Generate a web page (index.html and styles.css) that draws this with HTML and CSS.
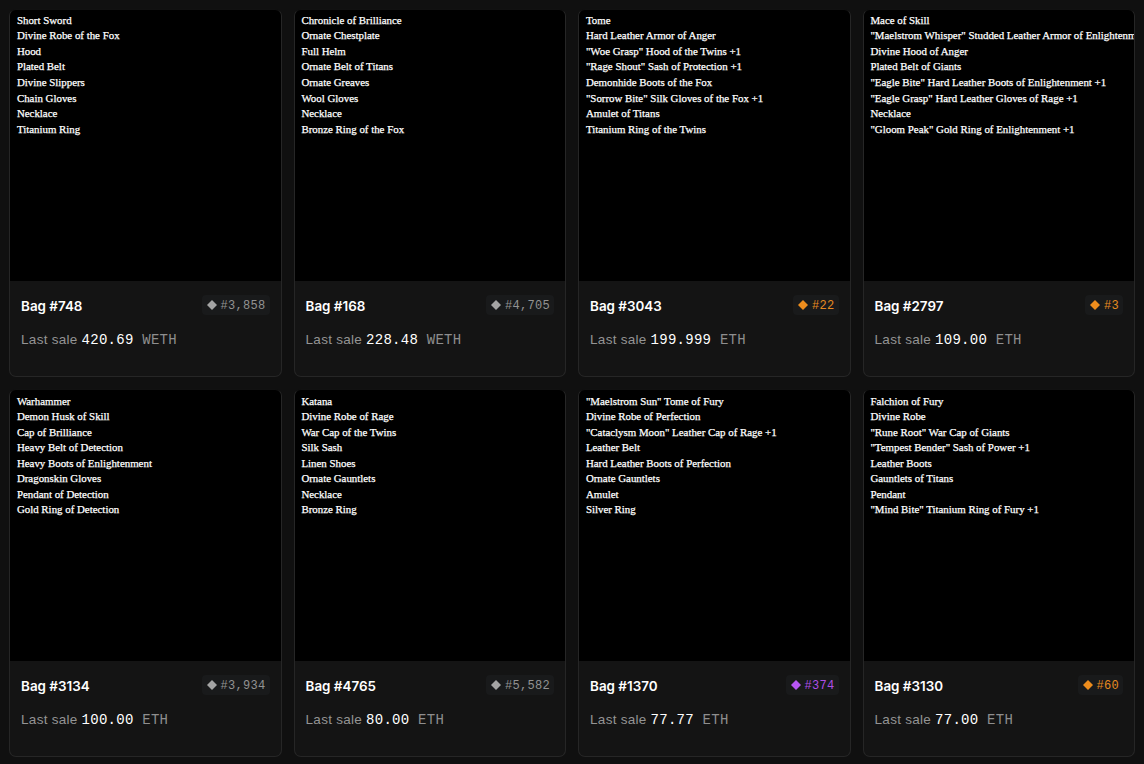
FILE: index.html
```html
<!DOCTYPE html>
<html lang="en">
<head>
<meta charset="utf-8">
<title>Bags</title>
<link rel="stylesheet" href="styles.css">
</head>
<body>
<main class="grid">
  <article class="card">
    <ul class="loot"><li>Short Sword</li><li>Divine Robe of the Fox</li><li>Hood</li><li>Plated Belt</li><li>Divine Slippers</li><li>Chain Gloves</li><li>Necklace</li><li>Titanium Ring</li></ul>
    <div class="info">
      <div class="head"><h2 class="name">Bag #748</h2><span class="rank"><svg class="gem" viewBox="0 0 10 10"><path d="M5 0 10 5 5 10 0 5Z"/></svg>#3,858</span></div>
      <p class="sale"><span class="label">Last sale</span><span class="price">420.69</span><span class="unit">WETH</span></p>
    </div>
  </article>
  <article class="card">
    <ul class="loot"><li>Chronicle of Brilliance</li><li>Ornate Chestplate</li><li>Full Helm</li><li>Ornate Belt of Titans</li><li>Ornate Greaves</li><li>Wool Gloves</li><li>Necklace</li><li>Bronze Ring of the Fox</li></ul>
    <div class="info">
      <div class="head"><h2 class="name">Bag #168</h2><span class="rank"><svg class="gem" viewBox="0 0 10 10"><path d="M5 0 10 5 5 10 0 5Z"/></svg>#4,705</span></div>
      <p class="sale"><span class="label">Last sale</span><span class="price">228.48</span><span class="unit">WETH</span></p>
    </div>
  </article>
  <article class="card">
    <ul class="loot"><li>Tome</li><li>Hard Leather Armor of Anger</li><li>"Woe Grasp" Hood of the Twins +1</li><li>"Rage Shout" Sash of Protection +1</li><li>Demonhide Boots of the Fox</li><li>"Sorrow Bite" Silk Gloves of the Fox +1</li><li>Amulet of Titans</li><li>Titanium Ring of the Twins</li></ul>
    <div class="info">
      <div class="head"><h2 class="name">Bag #3043</h2><span class="rank orange"><svg class="gem" viewBox="0 0 10 10"><path d="M5 0 10 5 5 10 0 5Z"/></svg>#22</span></div>
      <p class="sale"><span class="label">Last sale</span><span class="price">199.999</span><span class="unit">ETH</span></p>
    </div>
  </article>
  <article class="card">
    <ul class="loot"><li>Mace of Skill</li><li>"Maelstrom Whisper" Studded Leather Armor of Enlightenm</li><li>Divine Hood of Anger</li><li>Plated Belt of Giants</li><li>"Eagle Bite" Hard Leather Boots of Enlightenment +1</li><li>"Eagle Grasp" Hard Leather Gloves of Rage +1</li><li>Necklace</li><li>"Gloom Peak" Gold Ring of Enlightenment +1</li></ul>
    <div class="info">
      <div class="head"><h2 class="name">Bag #2797</h2><span class="rank orange"><svg class="gem" viewBox="0 0 10 10"><path d="M5 0 10 5 5 10 0 5Z"/></svg>#3</span></div>
      <p class="sale"><span class="label">Last sale</span><span class="price">109.00</span><span class="unit">ETH</span></p>
    </div>
  </article>
  <article class="card">
    <ul class="loot"><li>Warhammer</li><li>Demon Husk of Skill</li><li>Cap of Brilliance</li><li>Heavy Belt of Detection</li><li>Heavy Boots of Enlightenment</li><li>Dragonskin Gloves</li><li>Pendant of Detection</li><li>Gold Ring of Detection</li></ul>
    <div class="info">
      <div class="head"><h2 class="name">Bag #3134</h2><span class="rank"><svg class="gem" viewBox="0 0 10 10"><path d="M5 0 10 5 5 10 0 5Z"/></svg>#3,934</span></div>
      <p class="sale"><span class="label">Last sale</span><span class="price">100.00</span><span class="unit">ETH</span></p>
    </div>
  </article>
  <article class="card">
    <ul class="loot"><li>Katana</li><li>Divine Robe of Rage</li><li>War Cap of the Twins</li><li>Silk Sash</li><li>Linen Shoes</li><li>Ornate Gauntlets</li><li>Necklace</li><li>Bronze Ring</li></ul>
    <div class="info">
      <div class="head"><h2 class="name">Bag #4765</h2><span class="rank"><svg class="gem" viewBox="0 0 10 10"><path d="M5 0 10 5 5 10 0 5Z"/></svg>#5,582</span></div>
      <p class="sale"><span class="label">Last sale</span><span class="price">80.00</span><span class="unit">ETH</span></p>
    </div>
  </article>
  <article class="card">
    <ul class="loot"><li>"Maelstrom Sun" Tome of Fury</li><li>Divine Robe of Perfection</li><li>"Cataclysm Moon" Leather Cap of Rage +1</li><li>Leather Belt</li><li>Hard Leather Boots of Perfection</li><li>Ornate Gauntlets</li><li>Amulet</li><li>Silver Ring</li></ul>
    <div class="info">
      <div class="head"><h2 class="name">Bag #1370</h2><span class="rank purple"><svg class="gem" viewBox="0 0 10 10"><path d="M5 0 10 5 5 10 0 5Z"/></svg>#374</span></div>
      <p class="sale"><span class="label">Last sale</span><span class="price">77.77</span><span class="unit">ETH</span></p>
    </div>
  </article>
  <article class="card">
    <ul class="loot"><li>Falchion of Fury</li><li>Divine Robe</li><li>"Rune Root" War Cap of Giants</li><li>"Tempest Bender" Sash of Power +1</li><li>Leather Boots</li><li>Gauntlets of Titans</li><li>Pendant</li><li>"Mind Bite" Titanium Ring of Fury +1</li></ul>
    <div class="info">
      <div class="head"><h2 class="name">Bag #3130</h2><span class="rank orange"><svg class="gem" viewBox="0 0 10 10"><path d="M5 0 10 5 5 10 0 5Z"/></svg>#60</span></div>
      <p class="sale"><span class="label">Last sale</span><span class="price">77.00</span><span class="unit">ETH</span></p>
    </div>
  </article>
</main>
</body>
</html>
```
FILE: styles.css
```css
* { box-sizing: border-box; }
html, body { margin: 0; height: 100%; overflow: hidden; background: #101010; }
.grid {
  display: grid;
  grid-template-columns: repeat(4, 272.5px);
  grid-auto-rows: 368px;
  gap: 12px;
  padding: 9px 9.1px;
}
.card {
  display: flex;
  flex-direction: column;
  overflow: hidden;
  border: 1px solid #262626;
  border-top-color: #111;
  border-radius: 7px;
  background: #141414;
}
.loot {
  flex: none;
  height: 271px;
  margin: 0;
  padding: 2.8px 0 0 6.8px;
  overflow: hidden;
  list-style: none;
  background: #000;
  color: #fff;
  font: 10.88px/15.55px "Liberation Serif", serif;
  white-space: nowrap;
  -webkit-text-stroke: 0.25px #fff;
}
.card:nth-child(n+5) .loot { padding-top: 3.6px; line-height: 15.53px; }
.info { padding: 14px 11px 0; }
.head {
  display: flex;
  align-items: center;
  justify-content: space-between;
  height: 20px;
}
.name {
  margin: 2px 0 0;
  color: #fff;
  font: 600 13.4px/20px Inter, sans-serif;
}
.rank {
  display: flex;
  align-items: center;
  gap: 4px;
  height: 20px;
  padding: 2px 4px 0 4.6px;
  border-radius: 4px;
  background: #191a1b;
  color: #929292;
  font: 12px/18px "Liberation Mono", monospace;
  letter-spacing: 0.3px;
}
.gem { width: 10px; height: 10px; margin-bottom: 2px; fill: #a4a4a4; }
.orange { color: #e68a20; }
.orange .gem { fill: #ee8d1d; }
.purple { color: #af4ee6; }
.purple .gem { fill: #b956f5; }
.sale {
  display: flex;
  align-items: baseline;
  margin: 15px 0 0;
  font: 14px/20px "Liberation Mono", monospace;
  letter-spacing: 0.27px;
}
.label {
  color: #949494;
  font: 13.5px/20px "Liberation Sans", sans-serif;
  letter-spacing: 0.27px;
  margin-right: 4px;
}
.price { color: #fff; }
.unit { margin-left: 8.67px; color: #8e8e8e; }
```
